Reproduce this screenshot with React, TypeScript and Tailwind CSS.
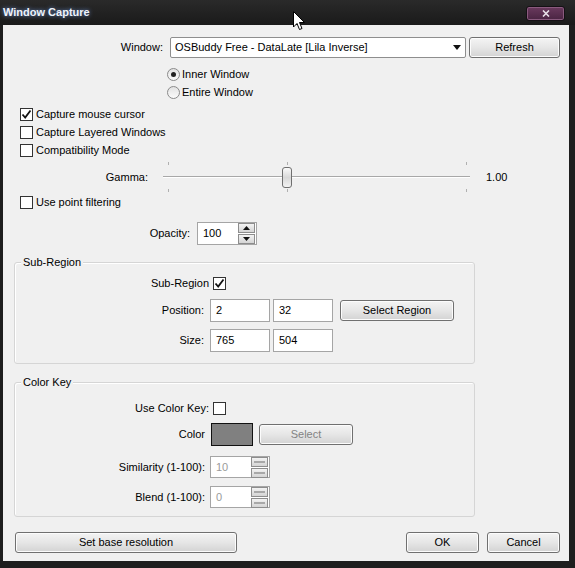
import React from 'react';

const font = { fontFamily: '"Liberation Sans", Arial, sans-serif' };

function Btn({ children, className = '', disabled = false }: { children: React.ReactNode; className?: string; disabled?: boolean }) {
  return (
    <div
      className={`h-[21px] flex items-center justify-center border border-[#707070] rounded-[3px] bg-linear-to-b from-[#f4f4f4] via-[#e6e6e6] to-[#d3d3d3] shadow-[inset_0_0_0_1px_#fcfcfc] text-[11px] ${disabled ? 'text-[#838383]' : 'text-black'} ${className}`}
    >
      {children}
    </div>
  );
}

function Check({ checked = false }: { checked?: boolean }) {
  return (
    <div className="w-[13px] h-[13px] border border-[#333] bg-white flex items-center justify-center shrink-0">
      {checked && (
        <svg width="11" height="11" viewBox="0 0 11 11">
          <path d="M1.5 5.5 L4.2 8.5 L9.5 1.5" fill="none" stroke="#111" strokeWidth="1.8" />
        </svg>
      )}
    </div>
  );
}

function Radio({ checked = false }: { checked?: boolean }) {
  return (
    <div className="w-[13px] h-[13px] rounded-full border border-[#8a8a8a] bg-linear-to-b from-[#e2e2e2] to-[#fbfbfb] flex items-center justify-center shrink-0">
      {checked && <div className="w-[5px] h-[5px] rounded-full bg-[#222]" />}
    </div>
  );
}

function Field({ value, w, h = 23, disabled = false }: { value: string; w: number; h?: number; disabled?: boolean }) {
  return (
    <div
      className={`border border-[#a5a5a5] bg-white flex items-center pl-[5px] text-[11px] ${disabled ? 'text-[#9a9a9a]' : 'text-black'}`}
      style={{ width: w, height: h }}
    >
      {value}
    </div>
  );
}

function SpinBox({ value, disabled = false, h = 23 }: { value: string; disabled?: boolean; h?: number }) {
  const half = 'h-[10px] w-[17px] border border-[#8d8d8d] bg-linear-to-b from-[#f3f3f3] to-[#d4d4d4] flex items-center justify-center';
  return (
    <div className="relative w-[60px] border border-[#a5a5a5] bg-white flex items-center" style={{ height: h }}>
      <span className={`pl-[5px] text-[11px] ${disabled ? 'text-[#9a9a9a]' : 'text-black'}`}>{value}</span>
      <div className="absolute right-[1px] top-[0px] flex flex-col gap-[1px]">
        <div className={half}>
          {disabled ? (
            <div className="w-[11px] h-[2px] bg-[#a8a8a8]" />
          ) : (
            <svg width="7" height="4" viewBox="0 0 7 4"><path d="M0 4 L3.5 0 L7 4 Z" fill="#111" /></svg>
          )}
        </div>
        <div className={half}>
          {disabled ? (
            <div className="w-[11px] h-[2px] bg-[#a8a8a8]" />
          ) : (
            <svg width="7" height="4" viewBox="0 0 7 4"><path d="M0 0 L3.5 4 L7 0 Z" fill="#111" /></svg>
          )}
        </div>
      </div>
    </div>
  );
}

function Group({ title, h, children }: { title: string; h: number; children: React.ReactNode }) {
  return (
    <div className="relative ml-[11px] w-[461px] border border-[#d5d5d5] rounded-[3px] shadow-[inset_1px_1px_0_#fff]" style={{ height: h }}>
      <div className="absolute left-[6px] top-[-8px] px-[2px] bg-[#f0f0f0] text-[11px] leading-[14px] text-black">{title}</div>
      <div className="flex flex-col">{children}</div>
    </div>
  );
}

export default function App() {
  return (
    <div className="relative w-[575px] h-[568px] bg-[#1e1e1e] flex flex-col overflow-hidden" style={font}>
      {/* title bar */}
      <div className="h-[25px] flex items-start justify-between bg-linear-to-b from-[#2a2a2a] to-[#1a1a1a]">
        <div className="pl-[3px] pt-[6px] text-[11px] font-bold text-[#eef3fb] leading-[13px] [text-shadow:0_0_4px_#6b8fd0]">Window Capture</div>
        <div className="mt-[6px] mr-[10px] w-[39px] h-[15px] rounded-[3px] border border-[#141014] bg-linear-to-b from-[#6a3a5e] to-[#4a2442] shadow-[inset_0_0_0_1px_#8a5a7e] flex items-center justify-center">
          <svg width="8" height="7" viewBox="0 0 8 7"><path d="M1 0.5 L7 6.5 M7 0.5 L1 6.5" stroke="#e8e0e8" strokeWidth="1.6" /></svg>
        </div>
      </div>

      {/* client area */}
      <div className="ml-[3px] w-[566px] h-[536px] bg-[#f0f0f0] flex flex-col text-[11px] text-black">
        {/* window row */}
        <div className="mt-[12px] flex items-center h-[21px]">
          <div className="w-[160px] text-right">Window:</div>
          <div className="ml-[7px] w-[296px] h-[21px] border border-[#8e8e8e] rounded-[2px] bg-white flex items-center justify-between pl-[4px] pr-[4px]">
            <span>OSBuddy Free - DataLate [Lila Inverse]</span>
            <svg width="8" height="5" viewBox="0 0 8 5"><path d="M0 0 L8 0 L4 5 Z" fill="#111" /></svg>
          </div>
          <Btn className="ml-[3px] w-[91px]">Refresh</Btn>
        </div>

        {/* radios */}
        <div className="mt-[7px] pl-[164px] flex flex-col">
          <div className="h-[18px] flex items-center gap-[2px]"><Radio checked /><span>Inner Window</span></div>
          <div className="h-[18px] flex items-center gap-[2px]"><Radio /><span>Entire Window</span></div>
        </div>

        {/* checkboxes */}
        <div className="mt-[4px] pl-[17px] flex flex-col">
          <div className="h-[18px] flex items-center gap-[3px]"><Check checked /><span>Capture mouse cursor</span></div>
          <div className="h-[18px] flex items-center gap-[3px]"><Check /><span>Capture Layered Windows</span></div>
          <div className="h-[18px] flex items-center gap-[3px]"><Check /><span>Compatibility Mode</span></div>
        </div>

        {/* gamma */}
        <div className="mt-[3px] h-[30px] flex items-center">
          <div className="w-[145px] text-right">Gamma:</div>
          <div className="ml-[15px] w-[307px] h-[30px] relative">
            <div className="absolute left-0 right-0 top-[14px] h-[1px] bg-[#a8a8a8]" />
            <div className="absolute left-0 right-0 top-[15px] h-[1px] bg-white" />
            <div className="absolute left-[5px] top-0 w-[1px] h-[3px] bg-[#b0b0b0]" />
            <div className="absolute left-[124px] top-0 w-[1px] h-[3px] bg-[#b0b0b0]" />
            <div className="absolute left-[303px] top-0 w-[1px] h-[3px] bg-[#b0b0b0]" />
            <div className="absolute left-[5px] top-[27px] w-[1px] h-[3px] bg-[#b0b0b0]" />
            <div className="absolute left-[124px] top-[27px] w-[1px] h-[3px] bg-[#b0b0b0]" />
            <div className="absolute left-[303px] top-[27px] w-[1px] h-[3px] bg-[#b0b0b0]" />
            <div className="absolute left-[119px] top-[5px] w-[10px] h-[21px] rounded-[3px] border border-[#6f6f6f] bg-linear-to-b from-[#fafafa] via-[#d8d8d8] to-[#f2f2f2]" />
          </div>
          <div className="ml-[16px]">1.00</div>
        </div>

        <div className="mt-[1px] pl-[17px] h-[18px] flex items-center gap-[3px]"><Check /><span>Use point filtering</span></div>

        {/* opacity */}
        <div className="mt-[11px] flex items-center h-[23px]">
          <div className="w-[187px] text-right">Opacity:</div>
          <div className="ml-[7px]"><SpinBox value="100" /></div>
        </div>

        {/* sub-region */}
        <div className="mt-[17px]">
          <Group title="Sub-Region" h={102}>
            <div className="mt-[11px] h-[18px] flex items-center">
              <div className="w-[194px] text-right">Sub-Region</div>
              <div className="ml-[4px]"><Check checked /></div>
            </div>
            <div className="mt-[7px] h-[23px] flex items-center">
              <div className="w-[189px] text-right">Position:</div>
              <div className="ml-[6px]"><Field value="2" w={60} /></div>
              <div className="ml-[3px]"><Field value="32" w={60} /></div>
              <Btn className="ml-[7px] w-[114px]">Select Region</Btn>
            </div>
            <div className="mt-[7px] h-[23px] flex items-center">
              <div className="w-[189px] text-right">Size:</div>
              <div className="ml-[6px]"><Field value="765" w={60} /></div>
              <div className="ml-[3px]"><Field value="504" w={60} /></div>
            </div>
          </Group>
        </div>

        {/* color key */}
        <div className="mt-[18px]">
          <Group title="Color Key" h={135}>
            <div className="mt-[16px] h-[18px] flex items-center">
              <div className="w-[194px] text-right">Use Color Key:</div>
              <div className="ml-[4px]"><Check /></div>
            </div>
            <div className="mt-[6px] h-[23px] flex items-center">
              <div className="w-[190px] text-right">Color</div>
              <div className="ml-[6px] w-[42px] h-[23px] border border-[#111] bg-[#808080]" />
              <Btn className="ml-[6px] w-[94px]" disabled>Select</Btn>
            </div>
            <div className="mt-[10px] h-[22px] flex items-center">
              <div className="w-[190px] text-right">Similarity (1-100):</div>
              <div className="ml-[5px]"><SpinBox value="10" disabled h={22} /></div>
            </div>
            <div className="mt-[8px] h-[22px] flex items-center">
              <div className="w-[190px] text-right">Blend (1-100):</div>
              <div className="ml-[5px]"><SpinBox value="0" disabled h={22} /></div>
            </div>
          </Group>
        </div>

        {/* bottom buttons */}
        <div className="mt-[15px] flex items-center">
          <Btn className="ml-[12px] w-[222px]">Set base resolution</Btn>
          <div className="flex-1" />
          <Btn className="w-[73px]">OK</Btn>
          <Btn className="ml-[8px] mr-[9px] w-[73px]">Cancel</Btn>
        </div>
      </div>

      {/* mouse cursor overlay */}
      <svg className="absolute left-[293px] top-[11px]" width="13" height="20" viewBox="0 0 13 20">
        <path d="M0.5 0.5 L0.5 16 L4 12.5 L6.5 18.5 L9 17.5 L6.5 11.5 L11.5 11.5 Z" fill="#fff" stroke="#000" strokeWidth="1" />
      </svg>
    </div>
  );
}
